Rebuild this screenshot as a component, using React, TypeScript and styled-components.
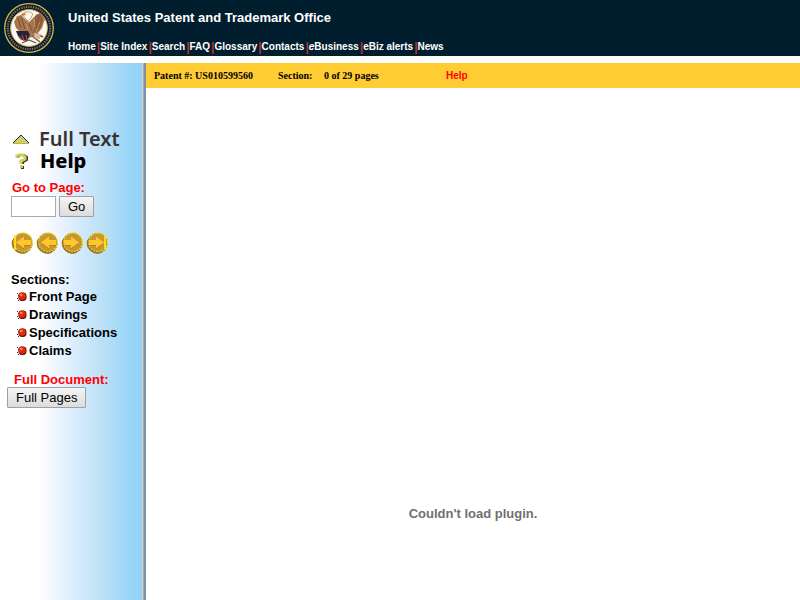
import React from "react";
import styled, { createGlobalStyle } from "styled-components";

const GlobalStyle = createGlobalStyle`
  * { box-sizing: border-box; }
  body { margin: 0; background: #fff; font-family: "Liberation Sans", Arial, sans-serif; color: #000; }
  a { color: inherit; text-decoration: none; }
`;

const Page = styled.div`
  display: flex;
  flex-direction: column;
  min-height: 100vh;
`;

const Header = styled.header`
  display: flex;
  gap: 13px;
  height: 56px;
  padding: 2px 4px;
  background: #001e2e;
  color: #fff;
`;

const Heading = styled.div`
  display: flex;
  flex-direction: column;
  gap: 14px;
  padding-top: 8px;
`;

const Title = styled.h1`
  margin: 0;
  font-size: 13px;
  line-height: 16px;
`;

const Nav = styled.nav`
  display: flex;
  align-items: center;
  font-size: 10px;
  font-weight: bold;
  line-height: 14px;
  white-space: nowrap;
`;

const Divider = styled.span`
  margin-left: 1px;
  color: #b8322f;
  font-size: 12px;
`;

const Columns = styled.div`
  display: flex;
  flex: 1;
  margin-top: 7px;
`;

const Sidebar = styled.aside`
  flex: 0 0 146px;
  padding: 65px 4px 24px 0;
  background: linear-gradient(
    to right,
    #fff 38px, #eaf4ff 60px, #cfe8fb 84px, #b4def6 108px, #9ad6f8 128px, #8fd2f6 142px,
    #d2d2d2 142px 143px, #a9a9a9 143px 144px, #7f92a8 144px 146px
  );
`;

const ImageLink = styled.a<{ $heavy?: boolean }>`
  display: grid;
  grid-template-columns: 20px 1fr;
  align-items: center;
  column-gap: ${(p) => (p.$heavy ? 8 : 7)}px;
  height: 22px;
  padding-left: 12px;
  font-family: "Comic Sans MS", "Noto Sans", sans-serif;
  font-size: 20px;
  line-height: 20px;
  font-weight: ${(p) => (p.$heavy ? 800 : 600)};
  color: ${(p) => (p.$heavy ? "#000" : "#3a3133")};
  white-space: nowrap;
`;

const PageForm = styled.form`
  padding: 8px 0 0 11px;
`;

const RedLabel = styled.label`
  display: block;
  padding-left: 1px;
  color: #f00;
  font-size: 13px;
  font-weight: bold;
  line-height: 16px;
`;

const FormRow = styled.div`
  display: flex;
  gap: 3px;
`;

const PageInput = styled.input`
  width: 45px;
  height: 21px;
  padding: 1px 3px;
  border: 1px solid #a9a9a9;
  background: #fff;
  font: 13px "Liberation Sans", Arial, sans-serif;
`;

const Button = styled.button`
  height: 21px;
  padding: 0 8px;
  border: 1px solid #a0a0a0;
  border-radius: 1px;
  background: linear-gradient(#f5f5f5, #dcdcdc);
  color: #000;
  font: 13px/17px "Liberation Sans", Arial, sans-serif;
`;

const Pager = styled.div`
  display: flex;
  gap: 3px;
  padding: 15px 0 0 11px;
`;

const PagerButton = styled.button`
  display: block;
  width: 22px;
  height: 22px;
  padding: 0;
  border: 0;
  background: none;
  svg { display: block; }
`;

const Sections = styled.section`
  padding: 17px 0 0 11px;
  font-size: 13px;
  font-weight: bold;
`;

const SectionsTitle = styled.h2`
  margin: 0;
  font-size: 13px;
  line-height: 17px;
`;

const SectionList = styled.ul`
  margin: 0;
  padding: 0 0 0 5px;
  list-style: none;
`;

const SectionLink = styled.a`
  display: flex;
  align-items: center;
  gap: 2px;
  line-height: 18px;
`;

const FullDocument = styled.div`
  display: flex;
  flex-direction: column;
  align-items: flex-start;
  padding: 12px 0 0 7px;
`;

const FullLabel = styled.div`
  padding-left: 7px;
  color: #f00;
  font-size: 13px;
  font-weight: bold;
  line-height: 15px;
`;

const Main = styled.main`
  flex: 1;
  min-width: 0;
`;

const InfoBar = styled.div`
  display: flex;
  align-items: center;
  height: 25px;
  padding-left: 8px;
  background: #ffcc33;
  font: bold 10px "Liberation Serif", "Times New Roman", serif;
  white-space: nowrap;
`;

const Info = styled.span<{ $width: number }>`
  flex: 0 0 ${(p) => p.$width}px;
`;

const HelpLink = styled.a`
  color: #f00;
  font-family: "Liberation Sans", Arial, sans-serif;
`;

const PluginMessage = styled.p`
  margin: 0;
  padding-top: 418px;
  color: #707070;
  font-size: 13px;
  font-weight: bold;
  line-height: 16px;
  text-align: center;
`;

function Seal() {
  return (
    <svg width="51" height="52" viewBox="0 0 51 52" aria-label="Department of Commerce seal">
      <circle cx="25" cy="26" r="24.3" fill="#101c28" stroke="#d9b54a" strokeWidth="1.3" />
      <circle cx="25" cy="26" r="21.2" fill="none" stroke="#77746c" strokeWidth="2.2" strokeDasharray="1.3 1.1" />
      <circle cx="25" cy="26" r="18.4" fill="#fbf8f3" stroke="#c9a64a" strokeWidth="1" />
      <path d="M13 14 10 20 12 26 16 30 17 34 23 37 30 34 36 37 34 31 38 26 41 17 38 12 33 12 28 17 25 20 22 18 17 13Z" fill="#a8764e" />
      <path d="M31 14 36 11 39 17 37 25 33 30 28 31 31 25Z" fill="#93603c" />
      <path d="M14 16 17 26M17 15 21 27M35 14 32 26M38 17 34 27M25 22 28 29" fill="none" stroke="#7b4e32" />
      <path d="M30 17 31 25M22 22 24 28M36 20 32 30" fill="none" stroke="#c79468" />
      <path d="M18 12 21 10 26 10 29 12 27 16 24 19 21 16Z" fill="#faf7ee" stroke="#a88260" strokeWidth="0.7" />
      <path d="M17 12 21 11 22 13 18 14Z" fill="#c98639" />
      <path d="M12 29H24L26 33 23 39 18 38 14 34Z" fill="#242338" />
      <path d="M15 35 18 38M18 33 20 39M22 33 23 38" stroke="#b4463d" strokeWidth="1.2" />
      <path d="M28 34 36 40M33 32 39 35" stroke="#8e4a34" strokeWidth="1.4" />
      <path d="M30 31 37 32 35 37 31 36Z" fill="#d8b9a3" />
      <path d="M18 41 25 38 32 41" fill="none" stroke="#665346" strokeWidth="1.2" />
    </svg>
  );
}

function UpIcon() {
  return (
    <svg width="18" height="14" viewBox="0 0 18 14" aria-hidden="true">
      <path d="M1 11 9 3 17 11Z" fill="#d0cd62" />
      <path d="M1 11 9 3" stroke="#222" />
      <path d="M9 3 17 11" fill="none" stroke="#26247b" />
      <path d="M1 11.5H17" stroke="#b7b24e" />
    </svg>
  );
}

function QuestionIcon() {
  return (
    <svg width="18" height="18" viewBox="0 0 18 18" aria-hidden="true">
      <path d="M6 6V5L8 3H12L15 5V8L11 10V12" fill="none" stroke="#34342a" strokeWidth="2" />
      <path d="M5 6V4L7 3H11L13 5V7L9 9V12" fill="none" stroke="#cfcf5d" strokeWidth="3" />
      <path d="M9 14H12V17H9Z" fill="#333" />
      <path d="M8 13H11V16H8Z" fill="#cfcf5d" />
    </svg>
  );
}

function CoinIcon({ back, end }: { back: boolean; end: boolean }) {
  return (
    <svg width="22" height="22" viewBox="0 0 22 22" aria-hidden="true">
      <circle cx="11.4" cy="11.2" r="10.3" fill="#8a681c" />
      <circle cx="12" cy="10.3" r="9.5" fill="#c99730" stroke="#f4e52e" strokeWidth="1.2" strokeDasharray="2 1" />
      <path d="M2 8A10 10 0 0 0 15 20.3" fill="none" stroke="#a07a24" strokeWidth="1.6" />
      <g transform={back ? undefined : "translate(23 0) scale(-1 1)"}>
        <path d="M5 10.5 13 4.5V8H20V13H13V16.5Z" fill="#ffc82a" />
        <path d="M13 13.5H20M6 11.8 13 17" stroke="#b17f20" strokeWidth="0.8" />
        {end && <path d="M4 4V18" stroke="#ffda22" strokeWidth="2" />}
      </g>
    </svg>
  );
}

function BulletIcon() {
  return (
    <svg width="11" height="10" viewBox="0 0 11 10" aria-hidden="true">
      <path d="M1 1H2V2H1ZM2 3H3V4H2ZM1 6H2V7H1ZM2 8H3V9H2Z" fill="#333" />
      <rect x="2.5" y="0.5" width="8" height="8.5" rx="3.4" fill="#681511" />
      <circle cx="6" cy="4.2" r="3.6" fill="#e22a0c" />
      <circle cx="5.2" cy="3" r="1.3" fill="#ff8b6b" />
    </svg>
  );
}

const navigation = [
  "Home", "Site Index", "Search", "FAQ", "Glossary", "Contacts", "eBusiness", "eBiz alerts", "News",
];
const pager = [
  { label: "First page", back: true, end: true },
  { label: "Previous page", back: true, end: false },
  { label: "Next page", back: false, end: false },
  { label: "Last page", back: false, end: true },
];
const sections = ["Front Page", "Drawings", "Specifications", "Claims"];

export default function App() {
  return (
    <Page>
      <GlobalStyle />
      <Header>
        <Seal />
        <Heading>
          <Title>United States Patent and Trademark Office</Title>
          <Nav>
            {navigation.map((item, i) => (
              <React.Fragment key={item}>
                {i > 0 && <Divider>|</Divider>}
                <a href="#">{item === "eBusiness" ? <><em>e</em>Business</> : item}</a>
              </React.Fragment>
            ))}
          </Nav>
        </Heading>
      </Header>
      <Columns>
        <Sidebar>
          <ImageLink href="#"><UpIcon />Full Text</ImageLink>
          <ImageLink href="#" $heavy><QuestionIcon />Help</ImageLink>
          <PageForm onSubmit={(e) => e.preventDefault()}>
            <RedLabel htmlFor="page">Go to Page:</RedLabel>
            <FormRow>
              <PageInput id="page" type="text" />
              <Button type="submit">Go</Button>
            </FormRow>
          </PageForm>
          <Pager>
            {pager.map((p) => (
              <PagerButton key={p.label} type="button" aria-label={p.label}>
                <CoinIcon back={p.back} end={p.end} />
              </PagerButton>
            ))}
          </Pager>
          <Sections>
            <SectionsTitle>Sections:</SectionsTitle>
            <SectionList>
              {sections.map((s) => (
                <li key={s}><SectionLink href="#"><BulletIcon />{s}</SectionLink></li>
              ))}
            </SectionList>
          </Sections>
          <FullDocument>
            <FullLabel>Full Document:</FullLabel>
            <Button type="button">Full Pages</Button>
          </FullDocument>
        </Sidebar>
        <Main>
          <InfoBar>
            <Info $width={124}>Patent #: US010599560</Info>
            <Info $width={46}>Section:</Info>
            <Info $width={122}>0 of 29 pages</Info>
            <HelpLink href="#">Help</HelpLink>
          </InfoBar>
          <PluginMessage>Couldn't load plugin.</PluginMessage>
        </Main>
      </Columns>
    </Page>
  );
}
